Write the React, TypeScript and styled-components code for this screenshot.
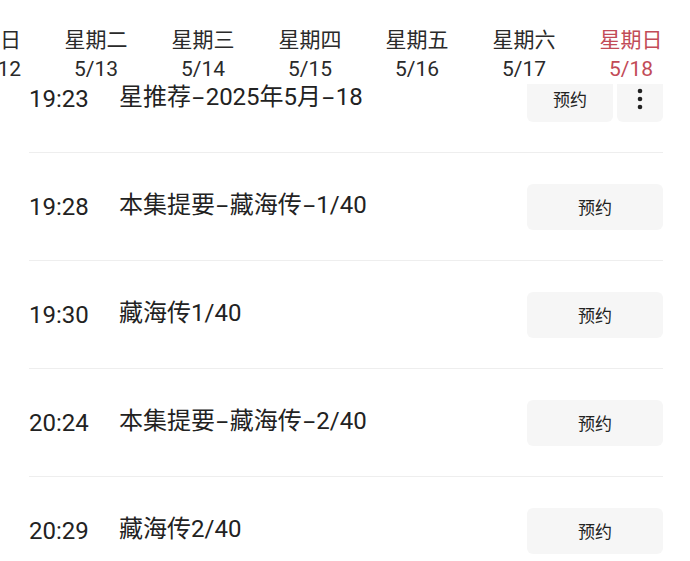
import styled, { createGlobalStyle } from 'styled-components';

const GlobalStyle = createGlobalStyle`
  html, body {
    margin: 0;
    padding: 0;
    background: #ffffff;
  }
  body {
    font-family: Roboto, "Noto Sans CJK SC", sans-serif;
    color: #222222;
  }
`;

const Page = styled.div`
  width: 690px;
  height: 561px;
  overflow: hidden;
  display: flex;
  flex-direction: column;
  background: #ffffff;
`;

const DayStrip = styled.div`
  height: 84px;
  flex-shrink: 0;
  display: flex;
  align-items: flex-start;
  padding-top: 26px;
  box-sizing: border-box;
`;

const DayCol = styled.div<{ $edge?: boolean; $active?: boolean }>`
  width: ${(p) => (p.$edge ? '21px' : '107px')};
  margin-right: ${(p) => (p.$edge ? '21.5px' : '0')};
  flex-shrink: 0;
  display: flex;
  flex-direction: column;
  align-items: ${(p) => (p.$edge ? 'flex-end' : 'center')};
  color: ${(p) => (p.$active ? '#c24b57' : '#2a2a2a')};
  white-space: nowrap;
`;

const DayName = styled.div`
  font-size: 21px;
  line-height: 28px;
`;

const DayDate = styled.div`
  font-size: 21px;
  line-height: 30px;
`;

const List = styled.div`
  flex: 1;
  overflow: hidden;
  padding: 0 27px 0 29px;
`;

const Row = styled.div<{ $first?: boolean }>`
  height: 108px;
  margin-top: ${(p) => (p.$first ? '-39px' : '0')};
  display: flex;
  align-items: center;
  border-bottom: 1.5px solid #eeeeee;
  box-sizing: border-box;
  padding-top: 1px;
`;

const Time = styled.div`
  width: 90px;
  font-size: 24px;
  color: #222222;
`;

const Title = styled.div`
  flex: 1;
  font-size: 24px;
  color: #222222;
  white-space: nowrap;
  padding-bottom: 10px;
`;

const Dash = styled.span`
  display: inline-block;
  margin: 0 4px;
  transform: scaleX(1.8);
`;

const Actions = styled.div`
  display: flex;
  gap: 4px;
`;

const ReserveButton = styled.button<{ $narrow?: boolean }>`
  width: ${(p) => (p.$narrow ? '86px' : '136px')};
  height: 46px;
  border: none;
  border-radius: 6px;
  background: #f6f6f6;
  font-family: "Noto Sans CJK SC", sans-serif;
  font-size: 17px;
  color: #222222;
  padding: 0 0 2px;
`;

const MoreButton = styled.button`
  width: 46px;
  height: 46px;
  border: none;
  border-radius: 6px;
  background: #f6f6f6;
  padding: 0;
  display: flex;
  align-items: center;
  justify-content: center;
`;

const days = [
  { name: '今日', date: '5/12' },
  { name: '星期二', date: '5/13' },
  { name: '星期三', date: '5/14' },
  { name: '星期四', date: '5/15' },
  { name: '星期五', date: '5/16' },
  { name: '星期六', date: '5/17' },
  { name: '星期日', date: '5/18' },
];

const programs = [
  { time: '19:23', title: '星推荐-2025年5月-18' },
  { time: '19:28', title: '本集提要-藏海传-1/40' },
  { time: '19:30', title: '藏海传1/40' },
  { time: '20:24', title: '本集提要-藏海传-2/40' },
  { time: '20:29', title: '藏海传2/40' },
];

function renderTitle(title: string) {
  const parts = title.split('-');
  return parts.map((part, i) => (
    <span key={i}>
      {i > 0 && <Dash>-</Dash>}
      {part}
    </span>
  ));
}

function App() {
  return (
    <>
      <GlobalStyle />
      <Page>
        <DayStrip>
          {days.map((d, i) => (
            <DayCol key={d.date} $edge={i === 0} $active={i === days.length - 1}>
              <DayName>{d.name}</DayName>
              <DayDate>{d.date}</DayDate>
            </DayCol>
          ))}
        </DayStrip>
        <List>
          {programs.map((p, i) => (
            <Row key={p.time} $first={i === 0}>
              <Time>{p.time}</Time>
              <Title>{renderTitle(p.title)}</Title>
              <Actions>
                <ReserveButton $narrow={i === 0}>预约</ReserveButton>
                {i === 0 && (
                  <MoreButton>
                    <svg width="6" height="24" viewBox="0 0 6 24">
                      <circle cx="3" cy="4" r="2.3" fill="#222" />
                      <circle cx="3" cy="12" r="2.3" fill="#222" />
                      <circle cx="3" cy="20" r="2.3" fill="#222" />
                    </svg>
                  </MoreButton>
                )}
              </Actions>
            </Row>
          ))}
        </List>
      </Page>
    </>
  );
}

export default App;
